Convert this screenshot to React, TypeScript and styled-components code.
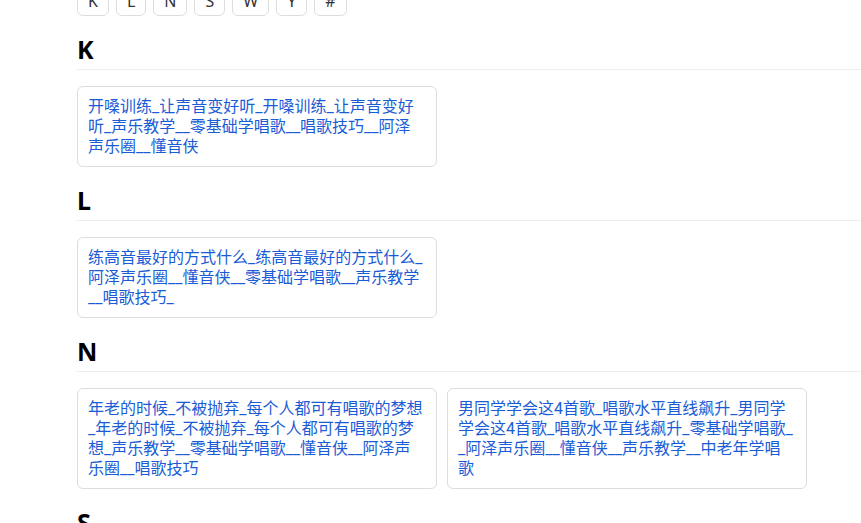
import React from 'react';
import styled, { createGlobalStyle } from 'styled-components';

const GlobalStyle = createGlobalStyle`
  html, body {
    margin: 0;
    padding: 0;
    background: #fff;
    overflow: hidden;
  }
  body {
    font-family: "Noto Sans", "Noto Sans CJK SC", sans-serif;
  }
`;

interface Group {
  letter: string;
  items: string[];
}

const groups: Group[] = [
  {
    letter: 'K',
    items: ['开嗓训练_让声音变好听_开嗓训练_让声音变好听_声乐教学__零基础学唱歌__唱歌技巧__阿泽声乐圈__懂音侠'],
  },
  {
    letter: 'L',
    items: ['练高音最好的方式什么_练高音最好的方式什么_阿泽声乐圈__懂音侠__零基础学唱歌__声乐教学__唱歌技巧_'],
  },
  {
    letter: 'N',
    items: [
      '年老的时候_不被抛弃_每个人都可有唱歌的梦想_年老的时候_不被抛弃_每个人都可有唱歌的梦想_声乐教学__零基础学唱歌__懂音侠__阿泽声乐圈__唱歌技巧',
      '男同学学会这4首歌_唱歌水平直线飙升_男同学学会这4首歌_唱歌水平直线飙升_零基础学唱歌__阿泽声乐圈__懂音侠__声乐教学__中老年学唱歌',
    ],
  },
  {
    letter: 'S',
    items: ['声乐教学__零基础学唱歌__唱歌技巧'],
  },
  {
    letter: 'W',
    items: ['唱歌技巧__阿泽声乐圈__懂音侠'],
  },
  {
    letter: 'Y',
    items: ['零基础学唱歌__声乐教学'],
  },
  {
    letter: '#',
    items: ['4首歌__中老年学唱歌'],
  },
];

const Page = styled.div`
  padding: 0 0 40px 77px;
`;

const IndexBar = styled.div`
  display: flex;
  gap: 7px;
  margin-top: -14px;
`;

const IndexButton = styled.a`
  display: block;
  padding: 4px 10px;
  line-height: 20px;
  font-size: 16px;
  color: #333;
  background: #fff;
  border: 1px solid #ddd;
  border-radius: 6px;
  text-decoration: none;
`;

const Section = styled.section`
  margin-top: 18px;
`;

const Heading = styled.h2`
  margin: 0;
  padding-bottom: 5px;
  font-family: "Noto Sans", sans-serif;
  font-size: 25px;
  line-height: 30px;
  font-weight: 700;
  color: #000;
  border-bottom: 1px solid #eee;
`;

const CardGrid = styled.div`
  display: flex;
  flex-wrap: wrap;
  gap: 10px;
  margin-top: 16px;
`;

const Card = styled.a`
  box-sizing: border-box;
  width: 360px;
  padding: 10px 10px 9px;
  border: 1px solid #ddd;
  border-radius: 6px;
  font-family: Roboto, "Noto Sans CJK SC", sans-serif;
  font-size: 16px;
  line-height: 20px;
  color: #1a5cd6;
  text-decoration: none;
  word-break: break-all;
`;

export default function App() {
  return (
    <>
      <GlobalStyle />
      <Page>
        <IndexBar>
          {groups.map((g) => (
            <IndexButton key={g.letter} href={`#${g.letter}`}>
              {g.letter}
            </IndexButton>
          ))}
        </IndexBar>
        {groups.map((g) => (
          <Section key={g.letter}>
            <Heading>{g.letter}</Heading>
            <CardGrid>
              {g.items.map((t, i) => (
                <Card key={i} href="#">
                  {t}
                </Card>
              ))}
            </CardGrid>
          </Section>
        ))}
      </Page>
    </>
  );
}
